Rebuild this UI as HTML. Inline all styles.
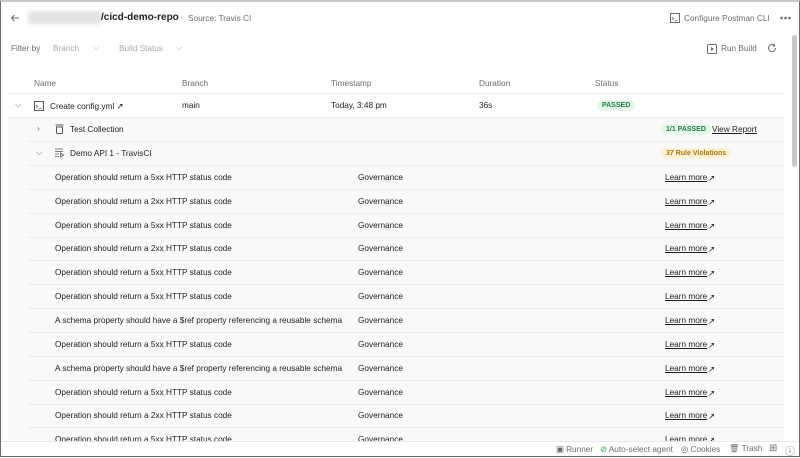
<!DOCTYPE html>
<html><head><style>
*{margin:0;padding:0;box-sizing:border-box}
body{width:800px;height:457px;overflow:hidden;background:#fff;font-family:"Liberation Sans",sans-serif;font-size:8.25px;color:#212121;position:relative}
.frame{position:absolute;left:0;top:0;width:800px;height:457px;border:1px solid #6b6b6b;border-top:2px solid #c8c8c8;pointer-events:none;z-index:10}
.a{position:absolute;white-space:nowrap}
.g{color:#6b6b6b}
.lg{color:#a6a6a6}
.gray{position:absolute;left:8px;top:118px;width:776px;height:323px;background:#f9f9f9}
.line{position:absolute;height:1px;background:#ececec}
.pill{position:absolute;border-radius:8px;font-weight:bold;font-size:7px;padding:2px 5px}
.u{text-decoration:underline}
svg{position:absolute}
.r{margin-top:1px}
</style></head><body>
<div class="frame"></div>
<svg style="left:10px;top:13px" width="10" height="10" viewBox="0 0 10 10"><path d="M9 5H1.5M4.5 2 1.5 5l3 3" stroke="#6b6b6b" stroke-width="1" fill="none"/></svg>
<div class="a" style="left:28px;top:11px;width:74px;height:13px;background:#e4e4e4;filter:blur(2px)"></div>
<div class="a" style="left:101px;top:12px;font-size:10px;font-weight:bold;color:#212121">/cicd-demo-repo</div>
<div class="a lg" style="left:180px;top:13px">·</div>
<div class="a g" style="left:188px;top:14px">Source: Travis CI</div>
<svg style="left:670px;top:13px" width="10" height="10" viewBox="0 0 10 10"><rect x="0.5" y="0.5" width="9" height="9" fill="none" stroke="#6b6b6b"/><path d="M2 4l1.5 1.5L2 7M4.5 7.5h3" stroke="#6b6b6b" fill="none" stroke-width=".8"/></svg>
<div class="a g" style="left:684px;top:14px">Configure Postman CLI</div>
<svg style="left:780px;top:16px" width="11" height="4" viewBox="0 0 11 4"><circle cx="1.5" cy="2" r="1.3" fill="#6b6b6b"/><circle cx="5.5" cy="2" r="1.3" fill="#6b6b6b"/><circle cx="9.5" cy="2" r="1.3" fill="#6b6b6b"/></svg>
<div class="a g" style="left:11px;top:44px">Filter by</div>
<div class="a lg" style="left:53px;top:44px">Branch</div>
<div class="a lg" style="left:93px;top:43px">⌵</div>
<div class="a lg" style="left:119px;top:44px">Build Status</div>
<div class="a lg" style="left:176px;top:43px">⌵</div>
<svg style="left:707px;top:44px" width="10" height="10" viewBox="0 0 10 10"><rect x="0.5" y="0.5" width="9" height="9" rx="1" fill="none" stroke="#6b6b6b"/><path d="M4 3v4l3-2z" fill="#6b6b6b"/></svg>
<div class="a g" style="left:721px;top:44px">Run Build</div>
<svg style="left:767px;top:43px" width="10" height="10" viewBox="0 0 10 10"><path d="M8.5 5A3.5 3.5 0 1 1 7 2.2M7.5 0.8v2.2H5.3" stroke="#6b6b6b" fill="none"/></svg>
<div class="a" style="left:792px;top:35px;width:5px;height:132px;background:#c8c8c8;border-radius:3px"></div>
<div class="a g" style="left:34px;top:79px">Name</div>
<div class="a g" style="left:182px;top:79px">Branch</div>
<div class="a g" style="left:331px;top:79px">Timestamp</div>
<div class="a g" style="left:479px;top:79px">Duration</div>
<div class="a g" style="left:595px;top:79px">Status</div>
<div class="line" style="left:8px;top:93px;width:776px"></div>
<div class="a g" style="left:15px;top:100px">⌵</div>
<svg style="left:34px;top:101px" width="10" height="10" viewBox="0 0 10 10"><rect x="0.5" y="0.5" width="9" height="9" fill="none" stroke="#555"/><path d="M2 4l1.5 1.5L2 7M4.5 7.5h3" stroke="#555" fill="none" stroke-width=".8"/></svg>
<div class="a" style="left:50px;top:101px">Create config.yml ↗</div>
<div class="a" style="left:182px;top:101px">main</div>
<div class="a" style="left:331px;top:101px">Today, 3:48 pm</div>
<div class="a" style="left:479px;top:101px">36s</div>
<div class="pill" style="left:597px;top:100px;background:#e5f6ea;color:#217a3b">PASSED</div>
<div class="gray"></div>
<div class="line" style="left:8px;top:117px;width:776px"></div>
<div class="a g" style="left:37px;top:124px">›</div>
<svg style="left:55px;top:124px" width="9" height="10" viewBox="0 0 9 10"><path d="M0.5 1h8M1.5 3h6v5.5a1 1 0 0 1-1 1h-4a1 1 0 0 1-1-1z" stroke="#555" fill="none"/></svg>
<div class="a" style="left:70px;top:125px">Test Collection</div>
<div class="pill" style="left:661px;top:124px;background:#e5f6ea;color:#217a3b">1/1 PASSED</div>
<div class="a u" style="left:712px;top:125px">View Report</div>
<div class="line" style="left:28px;top:141px;width:756px"></div>
<div class="a g" style="left:36px;top:148px">⌵</div>
<svg style="left:55px;top:148px" width="10" height="10" viewBox="0 0 10 10"><path d="M0 1h8M0 3.5h8M0 6h4M0 8.5h4M5.5 5v4l3-2z" stroke="#555" fill="none" stroke-width=".8"/></svg>
<div class="a" style="left:70px;top:149px">Demo API 1 - TravisCI</div>
<div class="pill" style="left:661px;top:148px;background:#fdf3d4;color:#a8730a">37 Rule Violations</div>
<div class="line" style="left:28px;top:165px;width:756px"></div>
<div class="a" style="left:55px;top:173px">Operation should return a 5xx HTTP status code</div><div class="a" style="left:358px;top:173px">Governance</div><div class="a u" style="left:665px;top:173px">Learn more</div><div class="a" style="left:708px;top:173px">↗</div><div class="line" style="left:28px;top:189px;width:756px"></div>
<div class="a" style="left:55px;top:197px">Operation should return a 2xx HTTP status code</div><div class="a" style="left:358px;top:197px">Governance</div><div class="a u" style="left:665px;top:197px">Learn more</div><div class="a" style="left:708px;top:197px">↗</div><div class="line" style="left:28px;top:213px;width:756px"></div>
<div class="a" style="left:55px;top:221px">Operation should return a 5xx HTTP status code</div><div class="a" style="left:358px;top:221px">Governance</div><div class="a u" style="left:665px;top:221px">Learn more</div><div class="a" style="left:708px;top:221px">↗</div><div class="line" style="left:28px;top:237px;width:756px"></div>
<div class="a" style="left:55px;top:244px">Operation should return a 2xx HTTP status code</div><div class="a" style="left:358px;top:244px">Governance</div><div class="a u" style="left:665px;top:244px">Learn more</div><div class="a" style="left:708px;top:244px">↗</div><div class="line" style="left:28px;top:260px;width:756px"></div>
<div class="a" style="left:55px;top:268px">Operation should return a 5xx HTTP status code</div><div class="a" style="left:358px;top:268px">Governance</div><div class="a u" style="left:665px;top:268px">Learn more</div><div class="a" style="left:708px;top:268px">↗</div><div class="line" style="left:28px;top:284px;width:756px"></div>
<div class="a" style="left:55px;top:292px">Operation should return a 5xx HTTP status code</div><div class="a" style="left:358px;top:292px">Governance</div><div class="a u" style="left:665px;top:292px">Learn more</div><div class="a" style="left:708px;top:292px">↗</div><div class="line" style="left:28px;top:308px;width:756px"></div>
<div class="a" style="left:55px;top:316px">A schema property should have a $ref property referencing a reusable schema</div><div class="a" style="left:358px;top:316px">Governance</div><div class="a u" style="left:665px;top:316px">Learn more</div><div class="a" style="left:708px;top:316px">↗</div><div class="line" style="left:28px;top:332px;width:756px"></div>
<div class="a" style="left:55px;top:340px">Operation should return a 5xx HTTP status code</div><div class="a" style="left:358px;top:340px">Governance</div><div class="a u" style="left:665px;top:340px">Learn more</div><div class="a" style="left:708px;top:340px">↗</div><div class="line" style="left:28px;top:356px;width:756px"></div>
<div class="a" style="left:55px;top:364px">A schema property should have a $ref property referencing a reusable schema</div><div class="a" style="left:358px;top:364px">Governance</div><div class="a u" style="left:665px;top:364px">Learn more</div><div class="a" style="left:708px;top:364px">↗</div><div class="line" style="left:28px;top:380px;width:756px"></div>
<div class="a" style="left:55px;top:388px">Operation should return a 5xx HTTP status code</div><div class="a" style="left:358px;top:388px">Governance</div><div class="a u" style="left:665px;top:388px">Learn more</div><div class="a" style="left:708px;top:388px">↗</div><div class="line" style="left:28px;top:404px;width:756px"></div>
<div class="a" style="left:55px;top:411px">Operation should return a 2xx HTTP status code</div><div class="a" style="left:358px;top:411px">Governance</div><div class="a u" style="left:665px;top:411px">Learn more</div><div class="a" style="left:708px;top:411px">↗</div><div class="line" style="left:28px;top:427px;width:756px"></div>
<div class="a" style="left:55px;top:435px">Operation should return a 5xx HTTP status code</div><div class="a" style="left:358px;top:435px">Governance</div><div class="a u" style="left:665px;top:435px">Learn more</div><div class="a" style="left:708px;top:435px">↗</div>
<div class="a" style="left:0;top:441px;width:800px;height:16px;background:#fff;border-top:1px solid #e6e6e6"></div>
<div class="a g" style="left:556px;top:444px">▣ Runner</div>
<div class="a g" style="left:600px;top:444px"><span style="color:#2d9a4b">⊘</span> Auto-select agent</div>
<div class="a g" style="left:681px;top:444px">◎ Cookies</div>
<div class="a g" style="left:729px;top:444px">🗑 Trash</div>
<div class="a g" style="left:769px;top:443px;font-size:10px">⊞</div>
<div class="a g" style="left:785px;top:443px;font-size:10px">ⓘ</div>
</body></html>
